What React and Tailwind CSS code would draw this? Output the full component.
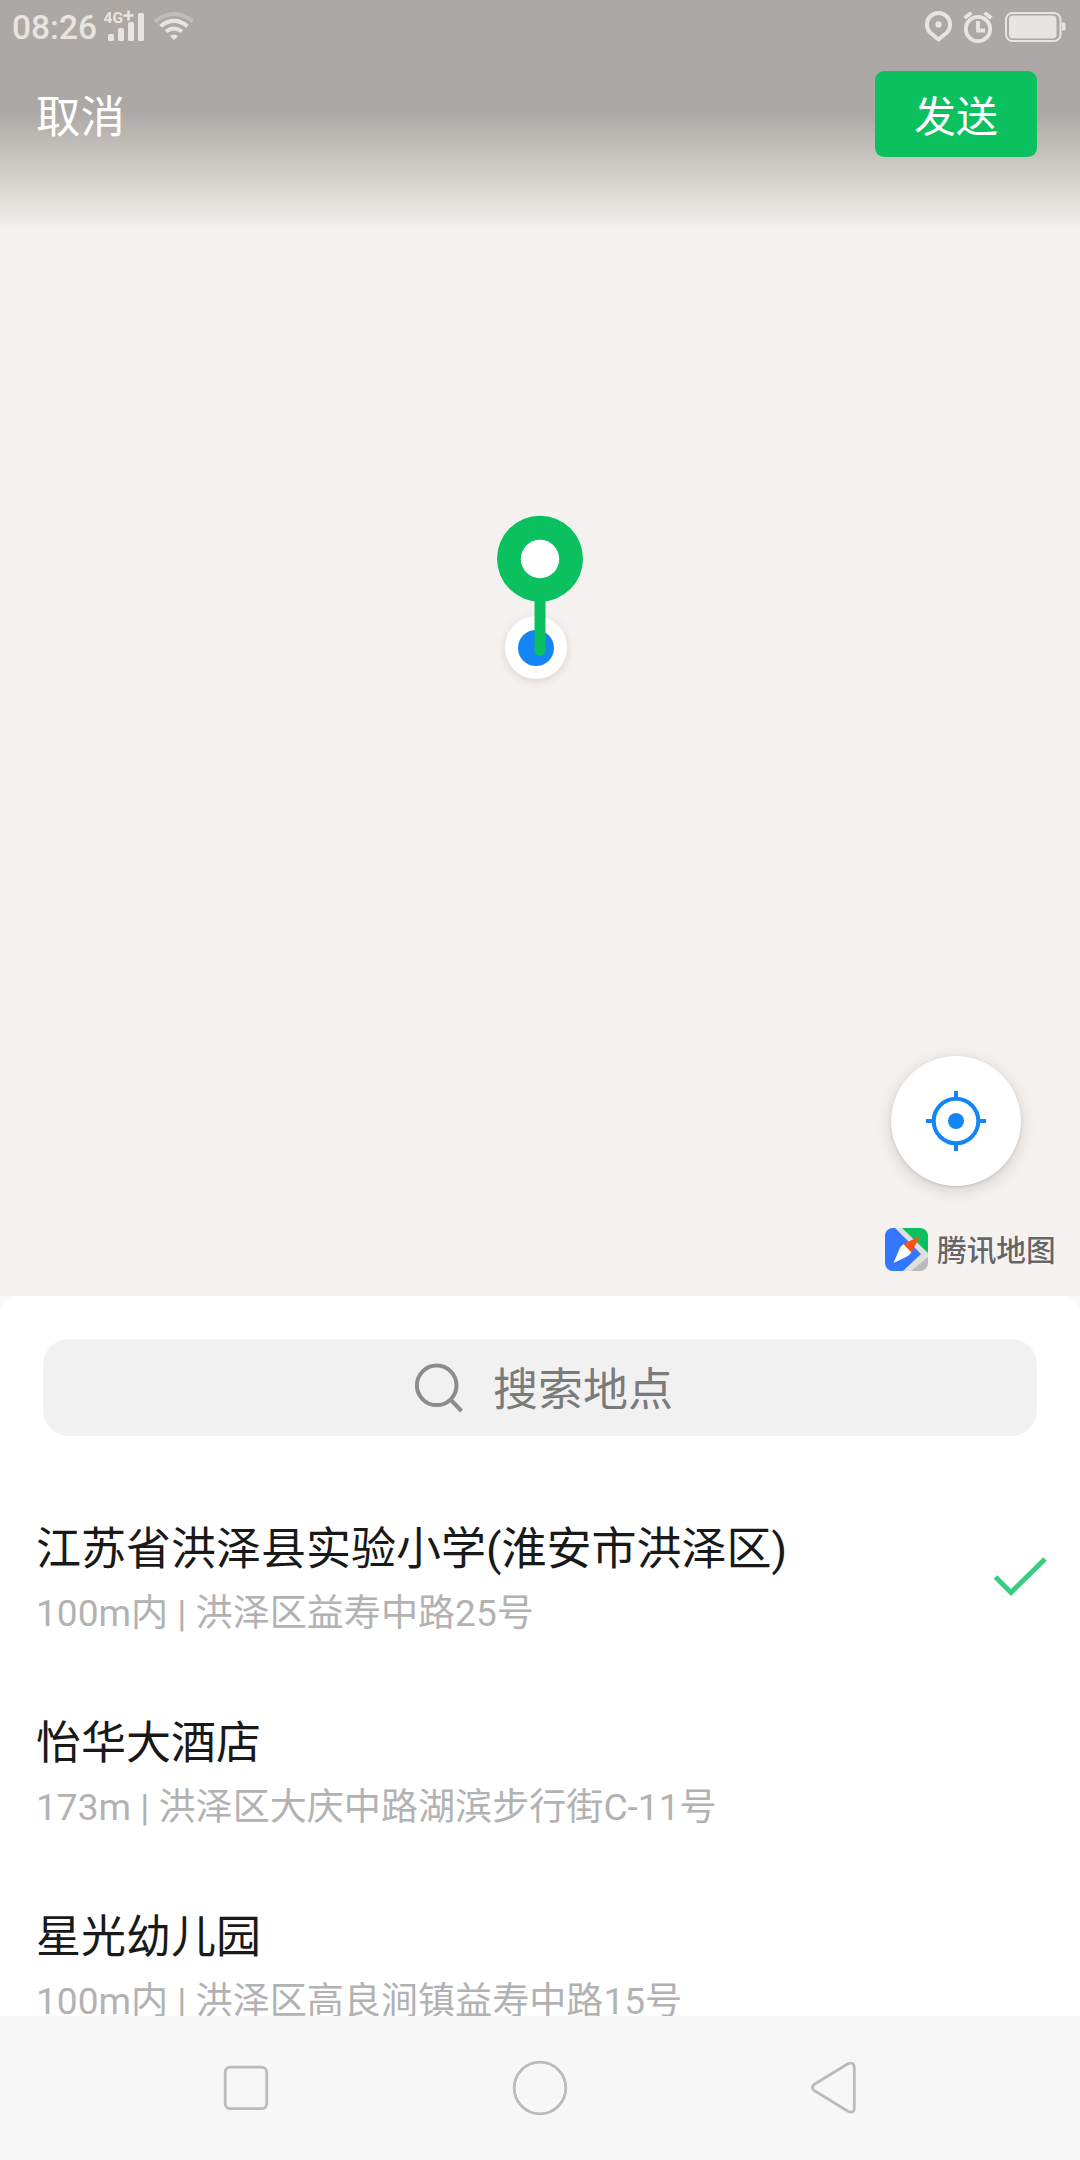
const places = [
  {
    name: "江苏省洪泽县实验小学(淮安市洪泽区)",
    detail: "100m内 | 洪泽区益寿中路25号",
    selected: true,
  },
  {
    name: "怡华大酒店",
    detail: "173m | 洪泽区大庆中路湖滨步行街C-11号",
  },
  {
    name: "星光幼儿园",
    detail: "100m内 | 洪泽区高良涧镇益寿中路15号",
  },
];

function StatusBar() {
  return (
    <div className="flex h-[54px] items-center justify-between pl-3 pr-[14px] text-[#e8e4e1]">
      <div className="flex items-center">
        <span className="w-[91px] pt-[2px] text-[33.5px] leading-none font-medium">
          08:26
        </span>
        {/* Signal bars with network type */}
        <svg className="h-[54px] w-[48px]" viewBox="103 0 48 54" fill="currentColor">
          <text x="103.5" y="23" fontSize="15.5" fontWeight="700">
            4G
          </text>
          <path d="M123.500 15.500H133.500M128.500 10.500V20.500" stroke="currentColor" strokeWidth="2.600" />
          <rect x="108" y="34" width="6" height="7" rx="1.5" />
          <rect x="118" y="28" width="6" height="13" rx="1.5" />
          <rect x="128" y="22" width="6" height="19" rx="1.5" />
          <rect x="138" y="13" width="6" height="28" rx="1.5" />
        </svg>
        <svg
          className="h-[54px] w-[46px]"
          viewBox="151 0 46 54"
          fill="none"
          stroke="currentColor"
          strokeWidth="4"
        >
          <path d="M155 21.500Q174 6.500 193 21.500" opacity="0.35" />
          <path d="M160.500 26.200Q174 15.500 187.500 26.200" />
          <path d="M166 31.500Q174 25.500 182 31.500" />
          <path d="M170 36Q174 33 178 36L174 40Z" fill="currentColor" stroke="none" />
        </svg>
      </div>
      <div className="flex items-center">
        <svg
          className="h-[54px] w-[39px]"
          viewBox="922 0 39 54"
          fill="none"
          stroke="currentColor"
          strokeWidth="4"
          strokeLinejoin="round"
        >
          <path d="M938.500 39.500L930 32.500A11.600 11.600 0 1 1 947 32.500Z" />
          <circle cx="938.500" cy="24.500" r="3.200" fill="currentColor" stroke="none" />
        </svg>
        <svg
          className="h-[54px] w-[42px]"
          viewBox="961 0 42 54"
          fill="none"
          stroke="currentColor"
          strokeWidth="3.800"
        >
          <circle cx="978" cy="29" r="12.200" />
          <path d="M978 21V30.500H985" />
          <path d="M964.500 18L971.500 12.800M984.500 12.800L991.500 18" />
        </svg>
        <svg className="h-[54px] w-[63px]" viewBox="1003 0 63 54" fill="currentColor">
          <rect
            x="1006"
            y="13"
            width="54.500"
            height="28"
            rx="6.500"
            fill="none"
            stroke="currentColor"
            strokeWidth="2"
          />
          <rect x="1009" y="15.500" width="47.500" height="23" rx="4" />
          <path d="M1062 22.500h2q1.500 0 1.500 1.500v5q0 1.500-1.500 1.500h-2z" />
        </svg>
      </div>
    </div>
  );
}

function TencentLogo() {
  return (
    <svg className="h-[43px] w-[43px]" viewBox="0 0 43 43">
      <defs>
        <clipPath id="logo">
          <rect width="43" height="43" rx="8" />
        </clipPath>
      </defs>
      <g clipPath="url(#logo)">
        <rect width="43" height="43" fill="#dfdfdf" />
        <path d="M0 0H10L36 26L18 43H0Z" fill="#3377ff" />
        <path d="M17 0H43V25Z" fill="#0bc15f" />
        <path d="M43 29V43H26Z" fill="#b9bab9" />
        <path d="M18.500 16L26.500 24Q25 27 21 29L8.500 35L14 22Q15.500 18 18.500 16Z" fill="#fff" />
        <path d="M18.500 16L35 8L26.500 24.500Z" fill="#fa5117" />
      </g>
    </svg>
  );
}

function MapArea() {
  return (
    <div className="relative h-[1296px] bg-[#f4f1ee]">
      <div className="h-[240px] bg-linear-to-b from-[#aca8a5] from-46% via-[#cecbc7] via-70% to-[#f4f1ee] to-96%">
        <StatusBar />
        <div className="flex items-center justify-between pt-[17px] pr-[43px] pl-[36px] text-white">
          <button className="pt-2 text-[44.500px] leading-[60px]">取消</button>
          <button className="h-[86px] w-[162px] rounded-[9px] bg-[#0bc15f] pt-2 text-[42px] leading-[60px]">
            发送
          </button>
        </div>
      </div>

      {/* Current position and the pin over it */}
      <div className="absolute top-[616px] left-[505px] flex h-[63px] w-[62px] items-center justify-center rounded-full bg-white shadow-[0_2px_10px_rgba(0,0,0,0.12)]">
        <div className="h-9 w-9 rounded-full bg-[#1485f5]" />
      </div>
      <svg className="absolute top-[515px] left-[496px] h-[142px] w-[88px]" viewBox="496 515 88 142">
        <path d="M540 598V650.500" stroke="#0bc15f" strokeWidth="11" strokeLinecap="round" />
        <circle cx="540" cy="558.700" r="43" fill="#0bc15f" />
        <circle cx="540" cy="559" r="19.200" fill="#fff" />
      </svg>

      <button className="absolute top-[1056px] left-[891px] flex h-[130px] w-[130px] items-center justify-center rounded-full bg-white shadow-[0_4px_16px_rgba(0,0,0,0.14),0_1px_3px_rgba(0,0,0,0.12)]">
        <svg className="h-[60px] w-[60px]" viewBox="0 0 60 60" fill="none" stroke="#1485f5" strokeWidth="4">
          <circle cx="30" cy="30" r="22.300" />
          <path d="M30 0V7M30 53V60M0 30H7M53 30H60" />
          <circle cx="30" cy="30" r="8" fill="#1485f5" stroke="none" />
        </svg>
      </button>

      <div className="absolute top-[1228px] left-[885px] flex items-center">
        <TencentLogo />
        <span className="ml-[9px] pt-[2px] text-[29.700px] leading-[41px] font-medium whitespace-nowrap text-[#666] [text-shadow:0_0_2px_#fff,0_0_2px_#fff]">
          腾讯地图
        </span>
      </div>
    </div>
  );
}

function PlaceRow({ place }) {
  return (
    <li className="flex h-[194px] items-center justify-between pr-[33px] pl-[36px]">
      <div className="pt-2">
        <div className="text-[45px] leading-[66px] text-[#191919]">{place.name}</div>
        <div className="text-[37.100px] leading-[62px] text-[#b2b2b2]">{place.detail}</div>
      </div>
      {place.selected && (
        <svg className="-mt-[2px] h-10 w-[54px]" viewBox="993 1556 54 40" fill="none" stroke="#38cd7f" strokeWidth="5">
          <path d="M995.500 1577L1011 1592.500L1045 1559" />
        </svg>
      )}
    </li>
  );
}

function NavBar() {
  return (
    <div className="flex h-36 items-center justify-between bg-[#f7f7f7] pr-[222px] pl-[223px]">
      <svg className="h-14 w-[46px]" viewBox="223 2060 46 56" fill="none" stroke="#bbb" strokeWidth="2.800">
        <rect x="225.200" y="2067.200" width="41.500" height="41.500" rx="5" />
      </svg>
      <svg className="h-14 w-14" viewBox="512 2060 56 56" fill="none" stroke="#bbb" strokeWidth="2.800">
        <circle cx="540" cy="2088" r="25.800" />
      </svg>
      <svg className="h-14 w-12" viewBox="810 2060 48 56" fill="none" stroke="#bbb" strokeWidth="2.800">
        <path d="M814 2084.500L847.500 2064Q854.300 2061 854.300 2068V2107.500Q854.300 2114.500 847.500 2111L814 2090.500Q811 2087.500 814 2084.500Z" />
      </svg>
    </div>
  );
}

export default function App() {
  return (
    <div
      lang="zh-CN"
      className="flex h-[2160px] w-[1080px] flex-col overflow-hidden bg-[#f9f9f9] font-[Roboto,'Noto_Sans_CJK_SC',sans-serif]"
    >
      <MapArea />
      <div className="h-[720px] overflow-hidden rounded-t-[18px] bg-white pt-[43px]">
        <div className="mx-[43px] flex h-[97px] items-center rounded-[26px] bg-[#f1f1f1] pl-[370px]">
          <svg className="h-[52px] w-[52px]" viewBox="413 1361 52 52" fill="none" stroke="#8c8c8c" strokeWidth="4">
            <circle cx="436.700" cy="1384.300" r="19.800" />
            <path d="M450.500 1398.500L461.500 1410" />
          </svg>
          <span className="ml-[28px] pt-[6px] text-[45px] leading-[66px] text-[#7b7b7b]">搜索地点</span>
        </div>
        <ul className="pt-[44px]">
          {places.map((place) => (
            <PlaceRow key={place.name} place={place} />
          ))}
        </ul>
      </div>
      <NavBar />
    </div>
  );
}
